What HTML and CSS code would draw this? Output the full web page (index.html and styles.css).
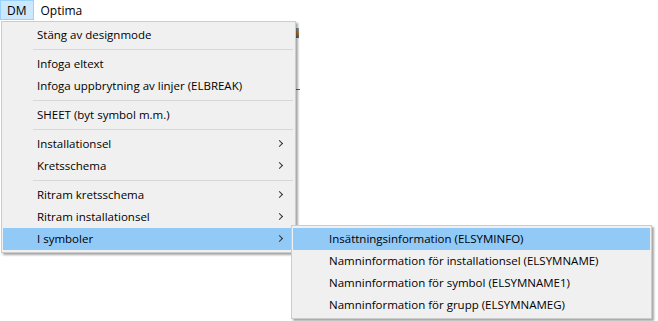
FILE: index.html
```html
<!DOCTYPE html>
<html lang="sv">
<head>
  <meta charset="UTF-8">
  <title>DM meny</title>
  <link rel="stylesheet" href="styles.css">
</head>
<body>
  <div class="menubar">
    <span class="bar-item open">DM</span>
    <span class="bar-item">Optima</span>
  </div>

  <div class="window-edge">
    <span class="tb-icon"></span>
    <span class="red-line"></span>
  </div>

  <div class="menu main-menu">
    <div class="item">Stäng av designmode</div>
    <div class="sep"></div>
    <div class="item">Infoga eltext</div>
    <div class="item">Infoga uppbrytning av linjer (ELBREAK)</div>
    <div class="sep"></div>
    <div class="item">SHEET (byt symbol m.m.)</div>
    <div class="sep"></div>
    <div class="item sub">Installationsel</div>
    <div class="item sub">Kretsschema</div>
    <div class="sep"></div>
    <div class="item sub">Ritram kretsschema</div>
    <div class="item sub">Ritram installationsel</div>
    <div class="item sub active">I symboler</div>
  </div>

  <div class="menu sub-menu">
    <div class="item active">Insättningsinformation (ELSYMINFO)</div>
    <div class="item">Namninformation för installationsel (ELSYMNAME)</div>
    <div class="item">Namninformation för symbol (ELSYMNAME1)</div>
    <div class="item">Namninformation för grupp (ELSYMNAMEG)</div>
  </div>
</body>
</html>
```

FILE: styles.css
```css
body {
  margin: 0;
  background: #fff;
  font-family: "Open Sans", "Noto Sans", sans-serif;
  font-size: 11.5px;
  color: #000;
}

.menubar {
  display: flex;
  height: 20px;
  align-items: stretch;
  font-size: 12px;
}

.bar-item {
  display: flex;
  align-items: center;
  padding: 0 6px;
  border: 1px solid transparent;
}

.bar-item.open {
  background: #cce8ff;
  border-color: #99d1ff;
}

/* window behind the menu, only its edge shows */
.window-edge {
  position: absolute;
  left: 296px;
  top: 22px;
  width: 4px;
  height: 80px;
}

.tb-icon {
  position: absolute;
  left: 0;
  top: 6px;
  width: 3px;
  height: 10px;
  background: linear-gradient(#6fa7c9, #c77b2a, #3a6f9a);
}

.red-line {
  position: absolute;
  left: 0;
  top: 67px;
  width: 4px;
  height: 1px;
  background: #d33;
}

.menu {
  position: absolute;
  box-sizing: border-box;
  background: #f0f0f0;
  border: 1px solid #cccccc;
  padding: 2px 1px;
  box-shadow: 2px 2px 2px rgba(0, 0, 0, 0.35);
}

.main-menu {
  left: 1px;
  top: 21px;
  width: 295px;
}

.sub-menu {
  left: 291px;
  top: 225px;
  width: 361px;
}

.item {
  position: relative;
  height: 22px;
  line-height: 22px;
  padding-left: 34px;
  white-space: nowrap;
}

.sub-menu .item {
  padding-left: 36px;
}

.item.active {
  background: #91c9f7;
}

.item.sub::after {
  content: "";
  position: absolute;
  right: 12px;
  top: 8px;
  width: 4px;
  height: 4px;
  border-right: 1px solid #333;
  border-top: 1px solid #333;
  transform: rotate(45deg);
}

.sep {
  height: 7px;
  position: relative;
}

.sep::after {
  content: "";
  position: absolute;
  left: 30px;
  right: 1px;
  top: 3px;
  height: 1px;
  background: #d7d7d7;
}
```
